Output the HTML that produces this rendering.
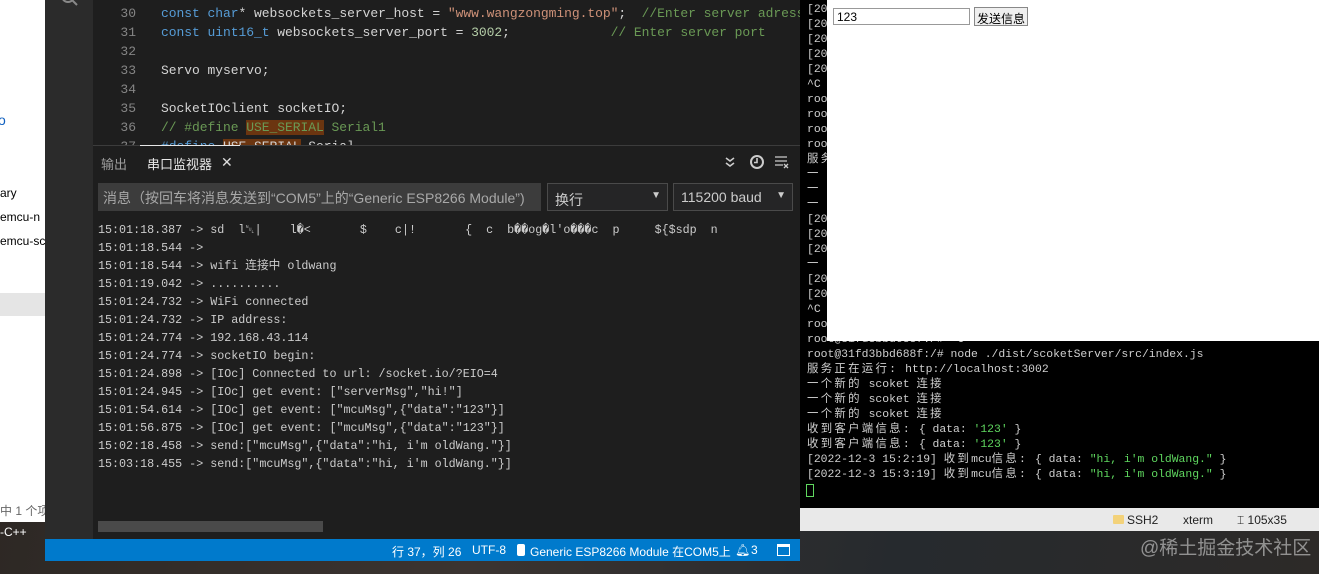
<!DOCTYPE html>
<html><head><meta charset="utf-8">
<style>
*{margin:0;padding:0;box-sizing:border-box}
body{width:1319px;height:574px;overflow:hidden;position:relative;background:linear-gradient(100deg,#2b2622 0%,#3b3431 40%,#262a2e 70%,#2d2a28 100%);font-family:"Liberation Sans","Noto Sans CJK SC",sans-serif}
.abs{position:absolute}
.left{left:0;top:0;width:45px;height:522px;background:#fff;overflow:hidden}
.left div{position:absolute;font-size:12px;color:#000;white-space:nowrap}
.vs{left:45px;top:0;width:755px;height:539px;background:#1e1e1e}
.act{left:45px;top:0;width:48px;height:539px;background:#2b2b2b}
.code{left:93px;top:0;width:707px;height:145px;background:#1e1e1e;overflow:hidden}
.ln{position:absolute;left:27px;width:16px;text-align:right;color:#858585;font:13px "Liberation Mono",monospace}
.cl{position:absolute;left:68px;color:#d4d4d4;font:13px "Liberation Mono",monospace;white-space:pre;letter-spacing:-0.05px}
.k{color:#569cd6}.s{color:#ce9178}.c{color:#6a9955}.n{color:#b5cea8}.h{background:#6b3510}
.panel{left:93px;top:145px;width:707px;height:394px;background:#1e1e1e;border-top:1px solid #3c3c3c}
.ser{position:absolute;left:5px;color:#cccccc;font:11.7px "Liberation Mono","Noto Sans CJK SC",monospace;white-space:pre;line-height:14px;height:14px}
.status{left:45px;top:539px;width:755px;height:22px;background:#007acc;color:#fff;font-size:12px}
.status span{position:absolute;top:4px;white-space:nowrap}
.term{left:800px;top:0;width:519px;height:508px;background:#000;overflow:hidden}
.tl{position:absolute;left:7px;color:#d0d0d0;font:11.4px "Liberation Mono","Noto Sans CJK SC",monospace;line-height:15px}
.tl div{height:15px;line-height:15px;white-space:pre}
.g{color:#5fd75f}
.cj{letter-spacing:2.3px}
.tstat{left:800px;top:508px;width:519px;height:23px;background:#e9e9e9;font-size:12px;color:#222}
.tstat span{position:absolute;top:5px}
.browser{left:827px;top:0;width:492px;height:341px;background:#fff}
</style></head><body>

<div class="abs left">
  <div style="left:-2px;top:112px;color:#1060c0;font-size:14px">o</div>
  <div style="left:0;top:186px">ary</div>
  <div style="left:0;top:210px">emcu-n</div>
  <div style="left:0;top:234px">emcu-sc</div>
  <div style="left:0;top:293px;width:45px;height:23px;background:#e5e5e5"></div>
  <div style="left:0;top:502px;color:#666">中 1 个项</div>
</div>
<div class="abs" style="left:0;top:525px;color:#fff;font-size:12px">-C++</div>

<div class="abs vs"></div>
<div class="abs act">
  <svg class="abs" style="left:14px;top:-6px" width="24" height="14"><circle cx="9" cy="2" r="6" fill="none" stroke="#888" stroke-width="2"/><line x1="13" y1="6" x2="18" y2="11" stroke="#888" stroke-width="2"/></svg>
</div>

<div class="abs code">
  <div class="ln" style="top:6px">30</div><div class="cl" style="top:6px"><span class="k">const</span> <span class="k">char</span>* websockets_server_host = <span class="s">"www.wangzongming.top"</span>;  <span class="c">//Enter server adress</span></div>
  <div class="ln" style="top:25px">31</div><div class="cl" style="top:25px"><span class="k">const</span> <span class="k">uint16_t</span> websockets_server_port = <span class="n">3002</span>;             <span class="c">// Enter server port</span></div>
  <div class="ln" style="top:44px">32</div>
  <div class="ln" style="top:63px">33</div><div class="cl" style="top:63px">Servo myservo;</div>
  <div class="ln" style="top:82px">34</div>
  <div class="ln" style="top:101px">35</div><div class="cl" style="top:101px">SocketIOclient socketIO;</div>
  <div class="ln" style="top:120px">36</div><div class="cl" style="top:120px"><span class="c">// #define </span><span class="h c">USE_SERIAL</span><span class="c"> Serial1</span></div>
  <div class="ln" style="top:139px">37</div><div class="cl" style="top:139px"><span class="k">#define</span> <span class="h">USE_SERIAL</span> Serial</div>
</div>

<div class="abs panel">
  <div class="abs" style="left:47px;top:-1px;width:100px;height:1px;background:#e7e7e7"></div>
  <div class="abs" style="left:8px;top:8px;color:#9d9d9d;font-size:13px">输出</div>
  <div class="abs" style="left:54px;top:8px;color:#e7e7e7;font-size:13px">串口监视器</div>
  <div class="abs" style="left:128px;top:8px;color:#ddd;font-size:14px">✕</div>
  <svg class="abs" style="left:630px;top:10px" width="14" height="12"><path d="M3 2l4 3 4-3M3 7l4 3 4-3" fill="none" stroke="#ccc" stroke-width="1.6"/></svg>
  <svg class="abs" style="left:656px;top:8px" width="16" height="16"><circle cx="8" cy="8" r="6" fill="none" stroke="#ccc" stroke-width="2"/><path d="M8 4v4.5H5" fill="none" stroke="#ccc" stroke-width="1.6"/></svg>
  <svg class="abs" style="left:681px;top:9px" width="16" height="14"><path d="M1 2h12M1 6h12M1 10h8M10 9l4 4M14 9l-4 4" fill="none" stroke="#ccc" stroke-width="1.3"/></svg>
  <div class="abs" style="left:5px;top:37px;width:443px;height:28px;background:#3c3c3c;color:#a8a8a8;font-size:14px;padding:5px 0 0 5px;white-space:nowrap;overflow:hidden">消息（按回车将消息发送到“COM5”上的“Generic ESP8266 Module”)</div>
  <div class="abs" style="left:454px;top:37px;width:121px;height:28px;border:1px solid #4a4a4a;background:#252526;color:#ccc;font-size:14px;padding:6px 0 0 7px">换行<span style="position:absolute;right:6px;top:6px;font-size:10px">▼</span></div>
  <div class="abs" style="left:580px;top:37px;width:120px;height:28px;border:1px solid #4a4a4a;background:#252526;color:#ccc;font-size:14px;padding:5px 0 0 7px">115200 baud<span style="position:absolute;right:6px;top:6px;font-size:10px">▼</span></div>
  <div class="ser" style="top:77px">15:01:18.387 -&gt; sd  l␀|    l�&lt;       $    c|!       {  c  b��og�l'o���c  p     ${$sdp  n</div>
  <div class="ser" style="top:95px">15:01:18.544 -&gt;</div>
  <div class="ser" style="top:113px">15:01:18.544 -&gt; wifi 连接中 oldwang</div>
  <div class="ser" style="top:131px">15:01:19.042 -&gt; ..........</div>
  <div class="ser" style="top:149px">15:01:24.732 -&gt; WiFi connected</div>
  <div class="ser" style="top:167px">15:01:24.732 -&gt; IP address:</div>
  <div class="ser" style="top:185px">15:01:24.774 -&gt; 192.168.43.114</div>
  <div class="ser" style="top:203px">15:01:24.774 -&gt; socketIO begin:</div>
  <div class="ser" style="top:221px">15:01:24.898 -&gt; [IOc] Connected to url: /socket.io/?EIO=4</div>
  <div class="ser" style="top:239px">15:01:24.945 -&gt; [IOc] get event: ["serverMsg","hi!"]</div>
  <div class="ser" style="top:257px">15:01:54.614 -&gt; [IOc] get event: ["mcuMsg",{"data":"123"}]</div>
  <div class="ser" style="top:275px">15:01:56.875 -&gt; [IOc] get event: ["mcuMsg",{"data":"123"}]</div>
  <div class="ser" style="top:293px">15:02:18.458 -&gt; send:["mcuMsg",{"data":"hi, i'm oldWang."}]</div>
  <div class="ser" style="top:311px">15:03:18.455 -&gt; send:["mcuMsg",{"data":"hi, i'm oldWang."}]</div>
  <div class="abs" style="left:5px;top:375px;width:225px;height:11px;background:#4a4a4a"></div>
</div>

<div class="abs status">
  <span style="left:347px">行 37，列 26</span>
  <span style="left:427px">UTF-8</span>
  <span style="left:472px;top:5px;width:8px;height:12px;background:#fff;border-radius:2px"></span>
  <span style="left:485px">Generic ESP8266 Module 在COM5上</span>
  <span style="left:690px">🔔︎</span>
  <span style="left:706px">3</span>
  <span style="left:732px;top:5px;width:13px;height:12px;border:1.5px solid #fff;border-top-width:3px"></span>
</div>

<div class="abs term">
  <div class="tl" style="top:3px"><div>[20</div><div>[20</div><div>[20</div><div>[20</div><div>[20</div><div>^C</div><div>roo</div><div>roo</div><div>roo</div><div>roo</div><div><span class="cj">服务</span></div><div>一</div><div>一</div><div>一</div><div>[20</div><div>[20</div><div>[20</div><div>一</div><div>[20</div><div>[20</div><div>^C</div><div>roo</div><div>root@31fd3bbd688f:/# ^C</div><div>root@31fd3bbd688f:/# node ./dist/scoketServer/src/index.js</div><div><span class="cj">服务正在运行:</span> http://localhost:3002</div><div><span class="cj">一个新的</span> scoket <span class="cj">连接</span></div><div><span class="cj">一个新的</span> scoket <span class="cj">连接</span></div><div><span class="cj">一个新的</span> scoket <span class="cj">连接</span></div><div><span class="cj">收到客户端信息:</span> { data: <span class="g">'123'</span> }</div><div><span class="cj">收到客户端信息:</span> { data: <span class="g">'123'</span> }</div><div>[2022-12-3 15:2:19] <span class="cj">收到</span>mcu<span class="cj">信息:</span> { data: <span class="g">"hi, i'm oldWang."</span> }</div><div>[2022-12-3 15:3:19] <span class="cj">收到</span>mcu<span class="cj">信息:</span> { data: <span class="g">"hi, i'm oldWang."</span> }</div></div>
  <div class="abs" style="left:6px;top:484px;width:8px;height:13px;border:1px solid #5fd75f"></div>
</div>

<div class="abs browser">
  <div class="abs" style="left:6px;top:8px;width:137px;height:17px;border:1px solid #999;font-size:12px;padding:1px 3px">123</div>
  <div class="abs" style="left:147px;top:7px;width:54px;height:19px;border:1px solid #888;background:#efefef;font-size:12px;text-align:center;padding-top:2px">发送信息</div>
</div>

<div class="abs tstat">
  <span style="left:313px;top:7px;width:11px;height:9px;background:#f3d27a;border-radius:1px"></span>
  <span style="left:327px">SSH2</span>
  <span style="left:383px">xterm</span>
  <span style="left:437px">⌶ 105x35</span>
</div>

<div class="abs" style="left:1140px;top:533px;color:rgba(230,230,230,0.55);font-size:19px;font-family:'Liberation Sans','Noto Sans CJK SC',sans-serif">@稀土掘金技术社区</div>
</body></html>
